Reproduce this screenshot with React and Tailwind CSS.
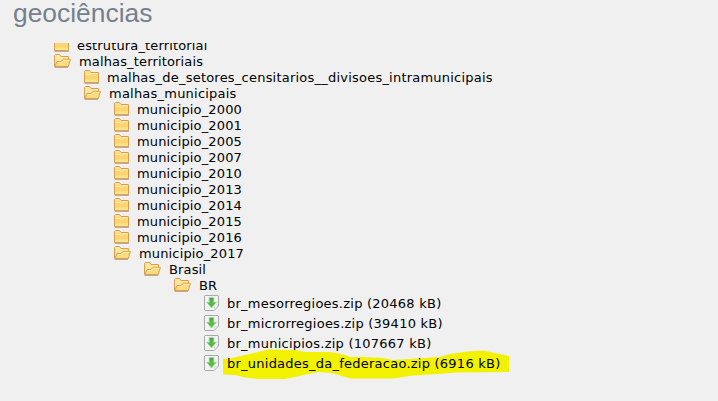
const tree = [
  { name: 'estrutura_territorial', depth: 0 },
  { name: 'malhas_territoriais', depth: 0, open: true },
  { name: 'malhas_de_setores_censitarios__divisoes_intramunicipais', depth: 1 },
  { name: 'malhas_municipais', depth: 1, open: true },
  { name: 'municipio_2000', depth: 2 },
  { name: 'municipio_2001', depth: 2 },
  { name: 'municipio_2005', depth: 2 },
  { name: 'municipio_2007', depth: 2 },
  { name: 'municipio_2010', depth: 2 },
  { name: 'municipio_2013', depth: 2 },
  { name: 'municipio_2014', depth: 2 },
  { name: 'municipio_2015', depth: 2 },
  { name: 'municipio_2016', depth: 2 },
  { name: 'municipio_2017', depth: 2, open: true },
  { name: 'Brasil', depth: 3, open: true },
  { name: 'BR', depth: 4, open: true },
];

const files = [
  { name: 'br_mesorregioes.zip (20468 kB)' },
  { name: 'br_microrregioes.zip (39410 kB)' },
  { name: 'br_municipios.zip (107667 kB)' },
  { name: 'br_unidades_da_federacao.zip (6916 kB)', marked: true },
];

const indents = ['pl-[54px]', 'pl-[84px]', 'pl-[114px]', 'pl-[144px]', 'pl-[174px]'];

function ClosedFolder() {
  return (
    <svg className="mr-2 h-4 w-[15px] shrink-0" viewBox="0 0 15 16">
      <defs>
        <linearGradient id="folder" x1="0" y1="0" x2="0" y2="1">
          <stop offset="0" stopColor="#fde394" />
          <stop offset=".65" stopColor="#fad36b" />
          <stop offset="1" stopColor="#fff09a" />
        </linearGradient>
      </defs>
      <path d="M.5 13.5H15" stroke="#b5aca4" />
      <path d="M.5 12.5V1.5L1.5 .5H5.5L7 2.5H14.5V12.5Z" fill="url(#folder)" stroke="#dc9d4c" />
      <path d="M1.5 4.5H6L7.5 3.5H13.5" stroke="#feeaa8" fill="none" />
    </svg>
  );
}

function OpenFolder() {
  return (
    <svg className="mr-2 h-4 w-[17px] shrink-0" viewBox="0 0 17 16">
      <path d="M.5 13.5H14" stroke="#b5aca4" />
      <path d="M.5 12.5V1.5L1.5 .5H5.5L7 2.5H14.4V5.2" fill="#fde6a0" stroke="#dc9d4c" />
      <path d="M.8 12.5L3 7.5H7L9 5.3H16.4L14.4 12.5H.8Z" fill="#fbdb7c" stroke="#dc9d4c" />
      <path d="M3.8 8.5H7.5L9.5 6.4H15.3" stroke="#fff0b5" fill="none" />
    </svg>
  );
}

function FileIcon() {
  return (
    <svg className="mr-2 mb-0.5 h-4 w-[15px] shrink-0" viewBox="0 0 15 16">
      <path d="M1 .5H14L14.5 1V11L10 15.5H1L.5 15V1Z" fill="#f3f3f5" stroke="#a9a8ac" />
      <path d="M10 15.3C11 14 10.8 12.8 10.5 12C12 12.3 13.5 12 14.3 11Z" fill="#fff" stroke="#c8c8ca" strokeWidth=".7" />
      <path d="M5.2 2.6H9.8V7.2H12.4L7.5 13L2.6 7.2H5.2Z" fill="#5cbb46" stroke="#a5d99b" strokeWidth=".8" />
      <path d="M5.8 3H9.2V5.5H5.8Z" fill="#4ca452" />
    </svg>
  );
}

function Marker() {
  return (
    <svg className="absolute left-[223px] -top-[5px] h-[31px] w-[287px]" viewBox="223 349 287 31">
      <path
        fill="#f2f200"
        d="M223 359L232 358L245 355L258 352L268 349.5L295 350L305 352L328 352L337 353L345 355L350 357L363 357L383 358L393 360L440 357L450 354L467 351.5L483 350.5L500 354L509 356V372L457 372.5L437 374L413 375.5L393 378.5H350L342 376L332 373L318 372L308 374L295 377L285 379H258L245 377.5L235 375L223 374.5Z"
      />
    </svg>
  );
}

export default function App() {
  return (
    <main className="flex h-[401px] w-[718px] flex-col overflow-hidden bg-[#f0f0f0]">
      <h1 className="h-[43px] shrink-0 pl-[13px] font-['Liberation_Sans',Arial,sans-serif] text-[26.4px] leading-[26px] text-[#75808f]">
        geociências
      </h1>
      <div className="flex-1 overflow-hidden font-['DejaVu_Sans',Verdana,sans-serif] text-[13px] text-black">
        <div className="-mt-[5px]">
          <ul>
            {tree.map((n) => (
              <li key={n.name} className={`flex h-4 items-center whitespace-pre leading-4 ${indents[n.depth]}`}>
                {n.open ? <OpenFolder /> : <ClosedFolder />}
                <span className={n.depth === 1 ? 'tracking-[0.22px]' : 'tracking-[0.15px]'}>{n.name}</span>
              </li>
            ))}
          </ul>
          <ul>
            {files.map((f) => (
              <li key={f.name} className="relative flex h-5 items-center whitespace-pre pl-[204px] leading-5">
                {f.marked && <Marker />}
                <FileIcon />
                <span className="relative tracking-[0.24px]">{f.name}</span>
              </li>
            ))}
          </ul>
        </div>
      </div>
    </main>
  );
}
